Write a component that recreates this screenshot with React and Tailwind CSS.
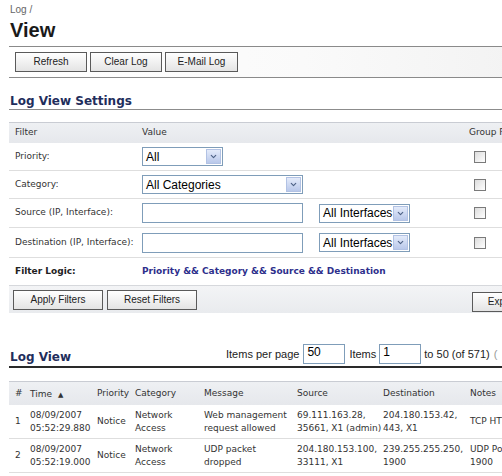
import { ChevronDown } from 'lucide-react';

const ui = { fontFamily: '"DejaVu Sans", Verdana, sans-serif' };
const arial = { fontFamily: '"Liberation Sans", Arial, sans-serif' };

const Btn = ({ children, w }) => (
  <button
    type="button"
    style={arial}
    className={`${w} h-[20px] border border-[#5a5a5a] bg-gradient-to-b from-white to-[#e4e4e4] text-[10px] text-[#222] leading-none`}
  >
    {children}
  </button>
);

const Select = ({ value, w }) => (
  <div className={`${w} h-[19px] border border-[#7f9db9] bg-white flex items-center justify-between pl-[3px] pr-[1px]`}>
    <span style={arial} className="text-[12px] text-black leading-none whitespace-nowrap">{value}</span>
    <span className="w-[15px] h-[15px] shrink-0 border border-[#b2c2e4] bg-gradient-to-b from-[#e4ebfa] to-[#b9c8ea] flex items-center justify-center">
      <ChevronDown size={9} strokeWidth={3} className="text-[#4d6185]" />
    </span>
  </div>
);

const TextBox = ({ w, value = '' }) => (
  <div className={`${w} h-[20px] border border-[#7f9db9] bg-white px-[3px] flex items-start`}>
    <span style={arial} className="text-[12px] text-black leading-[15px]">{value}</span>
  </div>
);

const Check = () => (
  <span className="block w-[12px] h-[12px] border border-[#7a7a7a] bg-gradient-to-br from-[#dcdcdc] to-white" />
);

const FilterRow = ({ label, h, children, extra }) => (
  <div className={`flex items-center ${h} border-b border-[#dedede]`}>
    <div className="w-[133px] pl-[6px] text-[9px] text-[#333]">{label}</div>
    <div className="w-[327px] flex items-center">
      {children}
      {extra}
    </div>
    <div className="pl-[5px]">
      <Check />
    </div>
  </div>
);

const rows = [
  {
    n: '1',
    time: ['08/09/2007', '05:52:29.880'],
    cat: ['Network', 'Access'],
    msg: ['Web management', 'request allowed'],
    src: ['69.111.163.28,', '35661, X1 (admin)'],
    dst: ['204.180.153.42,', '443, X1'],
    notes: ['TCP HTTP'],
  },
  {
    n: '2',
    time: ['08/09/2007', '05:52:19.000'],
    cat: ['Network', 'Access'],
    msg: ['UDP packet', 'dropped'],
    src: ['204.180.153.100,', '33111, X1'],
    dst: ['239.255.255.250,', '1900'],
    notes: ['UDP Port:', '1900'],
  },
];

const Lines = ({ items }) => (
  <div className="flex flex-col leading-[13px]">
    {items.map((t) => (
      <span key={t} className="whitespace-nowrap">{t}</span>
    ))}
  </div>
);

export default function App() {
  return (
    <div className="w-[502px] h-[476px] overflow-hidden bg-white" style={ui}>
      <div className="w-[600px] pl-[9px]">
        {/* breadcrumb + title */}
        <div style={arial} className="pt-[4px] pl-[1px] text-[10px] text-[#666] leading-[12px]">Log /</div>
        <h1 style={arial} className="pl-[1px] mt-[2px] text-[20px] font-bold text-[#1a1a1a] leading-[24px]">View</h1>

        {/* toolbar */}
        <div className="mt-[4px] h-[32px] border-t border-b border-[#8a8a8a] bg-gradient-to-r from-white via-[#fafafa] to-[#f0f0f0] flex items-center gap-[3px] pl-[6px]">
          <Btn w="w-[72px]">Refresh</Btn>
          <Btn w="w-[72px]">Clear Log</Btn>
          <Btn w="w-[73px]">E-Mail Log</Btn>
        </div>

        {/* settings heading */}
        <div className="mt-[16px] border-b border-[#8c8c8c]">
          <h2 className="pl-[1px] text-[12px] font-bold text-[#1f2e5c] leading-[15px]">Log View Settings</h2>
        </div>

        {/* filter table */}
        <div className="mt-[12px]">
          <div className="flex items-center h-[21px] border-t border-[#c9ccd3] bg-gradient-to-b from-[#eef0f3] to-[#e6e8ec] text-[9px] text-[#333]">
            <div className="w-[133px] pl-[6px]">Filter</div>
            <div className="w-[327px]">Value</div>
            <div className="whitespace-nowrap">Group Filters</div>
          </div>
          <FilterRow label="Priority:" h="h-[28px]">
            <Select value="All" w="w-[81px]" />
          </FilterRow>
          <FilterRow label="Category:" h="h-[28px]">
            <Select value="All Categories" w="w-[161px]" />
          </FilterRow>
          <FilterRow
            label="Source (IP, Interface):"
            h="h-[29px]"
            extra={<div className="ml-[16px]"><Select value="All Interfaces" w="w-[91px]" /></div>}
          >
            <TextBox w="w-[161px]" />
          </FilterRow>
          <FilterRow
            label="Destination (IP, Interface):"
            h="h-[30px]"
            extra={<div className="ml-[16px]"><Select value="All Interfaces" w="w-[91px]" /></div>}
          >
            <TextBox w="w-[161px]" />
          </FilterRow>
          <div className="flex items-center h-[27px] text-[9px] font-bold">
            <div className="w-[133px] pl-[6px] text-[#222]">Filter Logic:</div>
            <div className="text-[#2e2f8c] whitespace-nowrap">Priority &amp;&amp; Category &amp;&amp; Source &amp;&amp; Destination</div>
          </div>
          <div className="h-[28px] border-t border-[#d6d8dc] bg-gradient-to-b from-[#f3f4f6] to-[#e9ebee] flex items-center pl-[4px]">
            <div className="flex gap-[4px]">
              <Btn w="w-[90px]">Apply Filters</Btn>
              <Btn w="w-[90px]">Reset Filters</Btn>
            </div>
            <div className="ml-[275px]">
              <Btn w="w-[80px]">Export Log</Btn>
            </div>
          </div>
        </div>

        {/* log view heading */}
        <div className="mt-[31px] flex items-end border-b-2 border-[#2a2a2a] pb-[1px]">
          <h2 className="pl-[1px] w-[217px] text-[12px] font-bold text-[#1f2e5c] leading-[15px]">Log View</h2>
          <div style={arial} className="flex items-center text-[11px] text-[#222] whitespace-nowrap pb-[1px]">
            <span>Items per page</span>
            <span className="ml-[4px]"><TextBox w="w-[42px]" value="50" /></span>
            <span className="ml-[4px]">Items</span>
            <span className="ml-[3px]"><TextBox w="w-[42px]" value="1" /></span>
            <span className="ml-[3px]">to 50 (of 571)</span>
            <span className="ml-[4px] text-[#999]">(</span>
          </div>
        </div>

        {/* log table */}
        <div className="mt-[13px] text-[9px] text-[#333]">
          <div className="flex items-center h-[24px] border-t border-[#c9ccd3] bg-gradient-to-b from-[#eef0f3] to-[#e6e8ec]">
            <div className="w-[19px] pl-[6px]">#</div>
            <div className="w-[67px] pl-[2px] pt-[3px] flex items-center gap-[6px]">
              Time <span className="text-[7px]">▲</span>
            </div>
            <div className="w-[38px] pl-[2px]">Priority</div>
            <div className="w-[69px] pl-[2px]">Category</div>
            <div className="w-[93px] pl-[2px]">Message</div>
            <div className="w-[86px] pl-[2px]">Source</div>
            <div className="w-[87px] pl-[2px]">Destination</div>
            <div className="pl-[2px]">Notes</div>
          </div>
          {rows.map((r) => (
            <div key={r.n} className="flex items-center h-[34px] border-b border-[#dedede]">
              <div className="w-[19px] pl-[6px]">{r.n}</div>
              <div className="w-[67px] pl-[2px]"><Lines items={r.time} /></div>
              <div className="w-[38px] pl-[2px]">Notice</div>
              <div className="w-[69px] pl-[2px]"><Lines items={r.cat} /></div>
              <div className="w-[93px] pl-[2px]"><Lines items={r.msg} /></div>
              <div className="w-[86px] pl-[2px]"><Lines items={r.src} /></div>
              <div className="w-[87px] pl-[2px]"><Lines items={r.dst} /></div>
              <div className="pl-[2px]"><Lines items={r.notes} /></div>
            </div>
          ))}
        </div>
      </div>
    </div>
  );
}
